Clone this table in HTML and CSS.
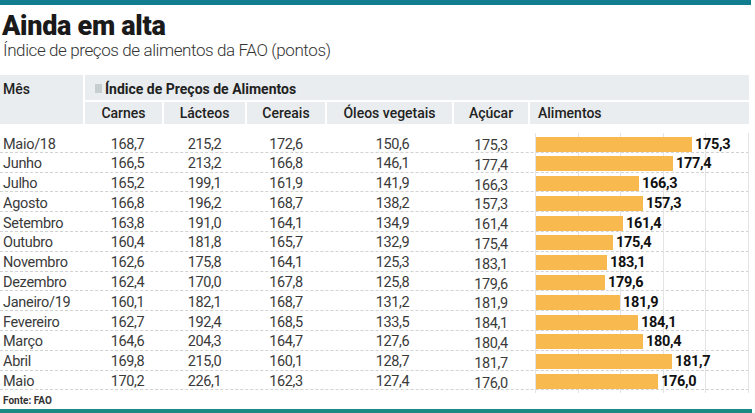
FILE: index.html
```html
<!DOCTYPE html>
<html lang="pt">
<head>
<meta charset="utf-8">
<title>Ainda em alta</title>
<link rel="stylesheet" href="styles.css">
</head>
<body>
<div class="top-bar"></div>
<h1 class="title">Ainda em alta</h1>
<p class="subtitle">Índice de preços de alimentos da FAO (pontos)</p>

<div class="thead">
  <div class="th th-mes">Mês</div>
  <div class="th th-group"><span class="sq"></span>Índice de Preços de Alimentos</div>
  <div class="th th-col">Carnes</div>
  <div class="th th-col">Lácteos</div>
  <div class="th th-col">Cereais</div>
  <div class="th th-col">Óleos vegetais</div>
  <div class="th th-col">Açúcar</div>
  <div class="th th-col th-left">Alimentos</div>
</div>

<div class="tbody">
  <div class="row"><span class="c-mes">Maio/18</span><span class="c-num c-carnes">168,7</span><span class="c-num">215,2</span><span class="c-num">172,6</span><span class="c-num c-oleos">150,6</span><span class="c-num c-acucar">175,3</span><div class="chart"><div class="bar" style="width:156px"></div><b class="lbl">175,3</b></div></div>
  <div class="row"><span class="c-mes">Junho</span><span class="c-num c-carnes">166,5</span><span class="c-num">213,2</span><span class="c-num">166,8</span><span class="c-num c-oleos">146,1</span><span class="c-num c-acucar">177,4</span><div class="chart"><div class="bar" style="width:137px"></div><b class="lbl">177,4</b></div></div>
  <div class="row"><span class="c-mes">Julho</span><span class="c-num c-carnes">165,2</span><span class="c-num">199,1</span><span class="c-num">161,9</span><span class="c-num c-oleos">141,9</span><span class="c-num c-acucar">166,3</span><div class="chart"><div class="bar" style="width:103px"></div><b class="lbl">166,3</b></div></div>
  <div class="row"><span class="c-mes">Agosto</span><span class="c-num c-carnes">166,8</span><span class="c-num">196,2</span><span class="c-num">168,7</span><span class="c-num c-oleos">138,2</span><span class="c-num c-acucar">157,3</span><div class="chart"><div class="bar" style="width:107px"></div><b class="lbl">157,3</b></div></div>
  <div class="row"><span class="c-mes">Setembro</span><span class="c-num c-carnes">163,8</span><span class="c-num">191,0</span><span class="c-num">164,1</span><span class="c-num c-oleos">134,9</span><span class="c-num c-acucar">161,4</span><div class="chart"><div class="bar" style="width:87px"></div><b class="lbl">161,4</b></div></div>
  <div class="row"><span class="c-mes">Outubro</span><span class="c-num c-carnes">160,4</span><span class="c-num">181,8</span><span class="c-num">165,7</span><span class="c-num c-oleos">132,9</span><span class="c-num c-acucar">175,4</span><div class="chart"><div class="bar" style="width:77px"></div><b class="lbl">175,4</b></div></div>
  <div class="row"><span class="c-mes">Novembro</span><span class="c-num c-carnes">162,6</span><span class="c-num">175,8</span><span class="c-num">164,1</span><span class="c-num c-oleos">125,3</span><span class="c-num c-acucar">183,1</span><div class="chart"><div class="bar" style="width:71px"></div><b class="lbl">183,1</b></div></div>
  <div class="row"><span class="c-mes">Dezembro</span><span class="c-num c-carnes">162,4</span><span class="c-num">170,0</span><span class="c-num">167,8</span><span class="c-num c-oleos">125,8</span><span class="c-num c-acucar">179,6</span><div class="chart"><div class="bar" style="width:69px"></div><b class="lbl">179,6</b></div></div>
  <div class="row"><span class="c-mes">Janeiro/19</span><span class="c-num c-carnes">160,1</span><span class="c-num">182,1</span><span class="c-num">168,7</span><span class="c-num c-oleos">131,2</span><span class="c-num c-acucar">181,9</span><div class="chart"><div class="bar" style="width:84px"></div><b class="lbl">181,9</b></div></div>
  <div class="row"><span class="c-mes">Fevereiro</span><span class="c-num c-carnes">162,7</span><span class="c-num">192,4</span><span class="c-num">168,5</span><span class="c-num c-oleos">133,5</span><span class="c-num c-acucar">184,1</span><div class="chart"><div class="bar" style="width:102px"></div><b class="lbl">184,1</b></div></div>
  <div class="row"><span class="c-mes">Março</span><span class="c-num c-carnes">164,6</span><span class="c-num">204,3</span><span class="c-num">164,7</span><span class="c-num c-oleos">127,6</span><span class="c-num c-acucar">180,4</span><div class="chart"><div class="bar" style="width:107px"></div><b class="lbl">180,4</b></div></div>
  <div class="row"><span class="c-mes">Abril</span><span class="c-num c-carnes">169,8</span><span class="c-num">215,0</span><span class="c-num">160,1</span><span class="c-num c-oleos">128,7</span><span class="c-num c-acucar">181,7</span><div class="chart"><div class="bar" style="width:136px"></div><b class="lbl">181,7</b></div></div>
  <div class="row"><span class="c-mes">Maio</span><span class="c-num c-carnes">170,2</span><span class="c-num">226,1</span><span class="c-num">162,3</span><span class="c-num c-oleos">127,4</span><span class="c-num c-acucar">176,0</span><div class="chart"><div class="bar" style="width:122px"></div><b class="lbl">176,0</b></div></div>
</div>

<p class="source">Fonte: FAO</p>
<div class="bottom-bar"></div>
</body>
</html>
```

FILE: styles.css
```css
html, body {
  margin: 0;
  padding: 0;
  background: #ffffff;
}

body {
  width: 755px;
  height: 413px;
  overflow: hidden;
  font-family: Roboto, "Liberation Sans", sans-serif;
  color: #2e2e2e;
}

.top-bar {
  width: 751px;
  height: 5px;
  background: #127d8e;
}

.title {
  margin: 8px 0 0 2px;
  font-size: 27px;
  line-height: 26px;
  font-weight: 900;
  color: #1a1a1a;
  letter-spacing: -0.3px;
}

.subtitle {
  margin: 1px 0 0 3px;
  font-size: 17px;
  line-height: 20px;
  font-weight: 300;
  color: #333;
  letter-spacing: -0.4px;
}

.thead,
.row {
  display: grid;
  grid-template-columns: 83px 77px 81px 78px 125px 74px 219px;
  column-gap: 2px;
}

.thead {
  margin-top: 15px;
  grid-template-rows: 25px 22px;
  row-gap: 2px;
}

.th {
  background: #e9edef;
  display: flex;
  align-items: center;
  font-size: 14px;
  font-weight: 500;
  color: #222;
}

.th-mes {
  grid-row: 1 / span 2;
  align-items: flex-start;
  padding: 6px 0 0 3px;
}

.th-group {
  grid-column: 2 / span 6;
  padding-left: 10px;
  font-weight: 700;
  gap: 3px;
  padding-top: 2px;
}

.sq {
  width: 7px;
  height: 9px;
  background: #c6ced2;
}

.th-col {
  justify-content: center;
}

.th-left {
  justify-content: flex-start;
  padding-left: 8px;
}

.tbody {
  margin-top: 9px;
}

.row {
  box-sizing: border-box;
  height: 19.8px;
  border-bottom: 1px dashed #d2d2d2;
  width: 749px;
  align-items: center;
  font-size: 14.5px;
  color: #3a3a3a;
}

.c-mes {
  padding-left: 3px;
  padding-top: 1px;
  letter-spacing: -0.3px;
}

.c-num {
  text-align: center;
  padding-top: 1px;
  letter-spacing: -0.4px;
}

.c-carnes {
  padding-left: 8px;
}

.c-oleos {
  padding-left: 6px;
}

.c-acucar {
  padding-top: 4px;
}

.chart {
  align-self: stretch;
  margin-left: 5px;
  margin-bottom: -1px;
  display: flex;
  align-items: center;
  background-image: repeating-linear-gradient(to right, #e4e4e4 0 1px, transparent 1px 42.6px);
}

.bar {
  height: 15px;
  margin-left: 1px;
  background: #f8b94f;
}

.lbl {
  margin-left: 3px;
  font-size: 14.5px;
  font-weight: 700;
  color: #111;
  letter-spacing: -0.3px;
}

.source {
  margin: 5px 0 0 3px;
  font-size: 10px;
  line-height: 12px;
  font-weight: 700;
  color: #333;
}

.bottom-bar {
  margin-top: 2px;
  width: 752px;
  height: 4px;
  background: #1a8a85;
}
```
